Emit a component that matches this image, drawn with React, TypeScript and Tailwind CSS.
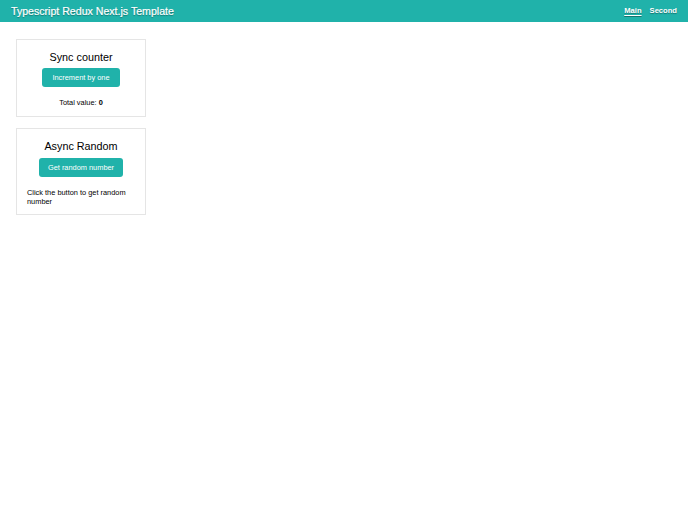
import React, { useState } from "react";

export default function App() {
  const [count, setCount] = useState(0);
  const [rand, setRand] = useState<number | null>(null);
  return (
    <div className="min-h-screen bg-white text-black font-['Liberation_Sans',Arial,sans-serif]">
      <header className="h-[22px] bg-[#20b2aa] flex items-center justify-between pl-[11px] pr-[11px] text-white [text-shadow:0_1px_1px_rgba(0,0,0,0.35)]">
        <div className="text-[10.6px] leading-none [-webkit-text-stroke:0.2px_white]">Typescript Redux Next.js Template</div>
        <nav className="flex gap-[8px] text-[7.6px] font-bold leading-none">
          <a className="underline underline-offset-[2px]">Main</a>
          <a>Second</a>
        </nav>
      </header>
      <main className="pl-[16px] pt-[17px] flex flex-col gap-[11px]">
        <div className="w-[130px] border border-[#e5e5e5] pt-[11px] pb-[9px] px-[10px] flex flex-col items-center">
          <div className="text-[10.8px] leading-[13px]">Sync counter</div>
          <button
            onClick={() => setCount(count + 1)}
            className="mt-[4px] h-[19px] px-[10px] rounded-[3px] bg-[#20b2aa] text-white text-[7.4px] leading-none"
          >
            Increment by one
          </button>
          <div className="mt-[11px] text-[7.4px] leading-[9px]">
            Total value: <b>{count}</b>
          </div>
        </div>
        <div className="w-[130px] border border-[#e5e5e5] pt-[11px] pb-[8px] px-[10px] flex flex-col items-center">
          <div className="text-[10.8px] leading-[13px]">Async Random</div>
          <button
            onClick={() => setRand(Math.floor(Math.random() * 100))}
            className="mt-[5px] h-[19px] px-[9px] rounded-[3px] bg-[#20b2aa] text-white text-[7.4px] leading-none"
          >
            Get random number
          </button>
          <div className="mt-[12px] self-stretch text-left text-[7.4px] leading-[8.5px]">
            {rand === null ? "Click the button to get random number" : `Random number: ${rand}`}
          </div>
        </div>
      </main>
    </div>
  );
}
